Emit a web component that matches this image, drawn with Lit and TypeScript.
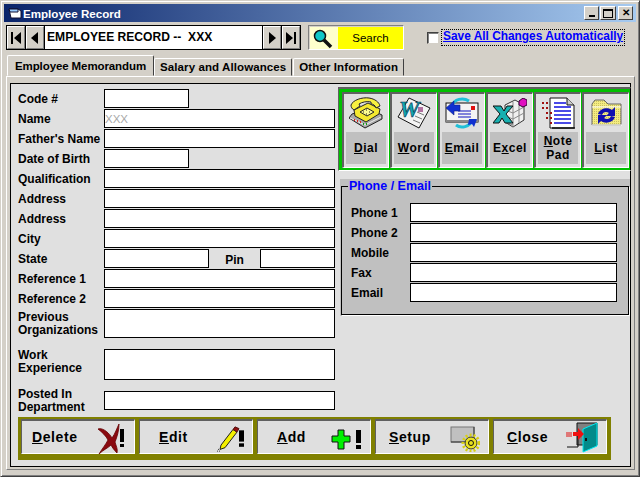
import { html, css, LitElement, svg } from "lit";
import { customElement } from "lit/decorators.js";

// icons are drawn on the pixel sizes they have in the screenshot
const icons: Record<string, any> = {
  dial: html`<svg width="34" height="32" viewBox="0 0 34 32">
    ${svg`<path d="M0 21 L16 31 L33 22 L33 18 L20 12 L3 17Z" fill="#a8a8a8" stroke="#222"/>
    <path d="M1 21 L16 28 L32 20" fill="none" stroke="#eee"/>
    <path d="M5 23h1m2 1h1m2 1h1" stroke="#e02020" stroke-width="2"/><path d="M14 27h1m2 0h1" stroke="#10a010" stroke-width="2"/>
    <path d="M5 13 L19 6 L31 12 L30 17 L17 25 L6 19Z" fill="#f4e830" stroke="#222"/>
    <path d="M11 15l7-4 7 4-7 4z" fill="#fcfc90" stroke="#222"/>
    <path d="M14 15h1m2-2h1m2 2h1m-4 2h1" stroke="#222"/>
    <path d="M2 8 C4 3 13 0 20 1 C26 2 30 5 31 9 L27 11 C26 8 24 7 22 7 L22 5 C18 4 13 5 10 7 L11 9 L5 13 C3 12 2 10 2 8Z" fill="#f8f040" stroke="#222"/>`}
  </svg>`,
  word: html`<svg width="34" height="32" viewBox="0 0 34 32">
    ${svg`<path d="M12 1 L33 11 L22 31 L1 20Z" fill="#f4f4f4" stroke="#111"/>
    <path d="M20 15l7 3m-9 1l7 3m-9 1l7 3" stroke="#777"/>
    <rect x="21" y="10" width="5" height="5" fill="#b070a0"/>
    <text x="2" y="20" font-family="Liberation Serif" font-weight="700" font-style="italic" font-size="23" fill="#10a8b0" stroke="#0a3050" stroke-width=".6">W</text>`}
  </svg>`,
  email: html`<svg width="34" height="32" viewBox="0 0 34 32">
    ${svg`<rect x="1" y="6" width="32" height="19" fill="#f4f4f4" stroke="#111"/>
    <path d="M1 24h32" stroke="#888" stroke-width="2"/>
    <rect x="26" y="9" width="4" height="4" fill="#e01010"/>
    <path d="M13 14h13m-13 3h13m-13 3h13" stroke="#1010c0"/>
    <path d="M7 9 C9 2 18 0 24 4" fill="none" stroke="#20c0d8" stroke-width="3"/>
    <path d="M1 11l8-7v4h6v6h-6v4z" fill="#1030d0" stroke="#102080" stroke-width=".6"/>
    <path d="M27 23 C25 30 16 32 11 28" fill="none" stroke="#20c0d8" stroke-width="3"/>
    <path d="M24 22h8l-3 8-2-3-4 1z" fill="#1030d0"/>`}
  </svg>`,
  excel: html`<svg width="34" height="30" viewBox="0 0 34 30">
    ${svg`<path d="M12 7 L22 2 L31 7 V22 L20 29 L12 24Z" fill="#f0f0f0" stroke="#333"/>
    <path d="M20 4V29M26 5V25M12 12l8 3 11-6M12 18l8 3 11-6M12 24l8 3" fill="none" stroke="#888"/>
    <path d="M0 8h8l3 5 3-5h6l-7 8 7 9h-8l-3-5-3 5H0l7-9z" fill="#18b0b0" stroke="#111"/>
    <path d="M26 3l4-3 4 2v5l-4 2-4-2z" fill="#e010c0" stroke="#300030"/>`}
  </svg>`,
  note: html`<svg width="34" height="32" viewBox="0 0 34 32">
    ${svg`<path d="M9 1H26L33 8V31H9Z" fill="#fff" stroke="#111"/>
    <path d="M26 1V8H33" fill="#ccc" stroke="#111"/>
    <path d="M11 31h23" stroke="#111" stroke-width="1.5"/>
    <path d="M13 6h12M13 10h17M13 14h17M13 18h17M13 22h17M13 26h17" stroke="#1010e0" stroke-width="1.5"/>
    <path d="M1 6h2m2 0h2m-6 5h2m2 0h2m-2 5h2m2 0h2m-6 5h2m2 0h2m-2 5h2" stroke="#a01010" stroke-width="2" stroke-dasharray="2 1"/>`}
  </svg>`,
  list: html`<svg width="33" height="28" viewBox="0 0 33 28">
    ${svg`<defs><pattern id="dots" width="2" height="2" patternUnits="userSpaceOnUse"><rect width="2" height="2" fill="#f4ec80"/><rect width="1" height="1" fill="#c8c060"/></pattern></defs>
    <path d="M2 26 V5 L5 1 H14 L18 5 H31 V26Z" fill="url(#dots)" stroke="#666"/>
    <path d="M2 8 H31 M2 26h30" stroke="#fff"/>
    <path d="M8 15 C10 9 18 8 22 11 L25 8 V17 H16 L19 14 C16 12 13 13 12 16Z" fill="#1010b0"/>
    <path d="M25 18 C23 24 15 25 11 22 L8 25 V16 H17 L14 19 C17 21 20 20 21 17Z" fill="#1010b0"/>`}
  </svg>`,
  delete: html`<svg width="30" height="30" viewBox="0 0 30 30">
    ${svg`<path d="M0 5 C5 3 12 10 14 14 C17 10 19 4 21 0 C21 7 19 13 17 18 C18 22 20 25 19 29 C16 26 14 23 13 21 C10 24 5 26 1 30 C4 25 8 20 10 16 C8 12 4 8 0 5Z" fill="#8a0a10" stroke="#600" stroke-width=".8"/>
    <rect x="22" y="5" width="4" height="13" fill="#000"/><rect x="22" y="20" width="4" height="3" fill="#000"/>`}
  </svg>`,
  edit: html`<svg width="32" height="26" viewBox="0 0 32 30" preserveAspectRatio="none">
    ${svg`<path d="M7 22 L19 4 L23 7 L11 25 L6 27Z" fill="#f4f000" stroke="#111"/>
    <path d="M19 4 L21 1 L25 3 L23 7Z" fill="#901010" stroke="#501010"/>
    <path d="M4 27h1m-2 2h1m1 0h1" stroke="#333"/>
    <rect x="25" y="5" width="5" height="13" fill="#000"/><rect x="25" y="20" width="5" height="4" fill="#000"/>`}
  </svg>`,
  add: html`<svg width="32" height="22" viewBox="0 0 32 22">
    ${svg`<path d="M7 1H13V7H19V13H13V20H7V13H1V7H7Z" fill="#00f000" stroke="#111"/>
    <rect x="25" y="1" width="5" height="13" fill="#000"/><rect x="25" y="16" width="5" height="4" fill="#000"/>`}
  </svg>`,
  setup: html`<svg width="30" height="26" viewBox="0 0 30 26">
    ${svg`<rect x="1" y="1" width="23" height="15" fill="#c0c0c0" stroke="#777"/>
    <path d="M1 16h23V1" fill="none" stroke="#333"/>
    <circle cx="21" cy="17" r="6" fill="#e8e020" stroke="#333"/>
    <circle cx="21" cy="17" r="8" fill="none" stroke="#d8d010" stroke-width="3" stroke-dasharray="2 2"/>
    <circle cx="21" cy="17" r="2.5" fill="#e8e020" stroke="#111"/>`}
  </svg>`,
  close: html`<svg width="32" height="32" viewBox="0 0 32 32">
    ${svg`<path d="M11 2H31V24H11Z" fill="#808080" stroke="#111"/>
    <path d="M17 8 L31 2 V25 L17 31Z" fill="#048a8a" stroke="#00e8f0"/>
    <rect x="19" y="17" width="2" height="3" fill="#111"/>
    <path d="M1 26H12V13" fill="none" stroke="#111"/>
    <path d="M1 11v5m2-5v5m2-5v5" stroke="#e01010"/>
    <path d="M7 11h5V7l6 6-6 6v-4H7z" fill="#f01010"/>`}
  </svg>`,
};

const tools = [
  { icon: "dial", label: html`<u>D</u>ial` },
  { icon: "word", label: html`<u>W</u>ord` },
  { icon: "email", label: html`<u>E</u>mail` },
  { icon: "excel", label: html`E<u>x</u>cel` },
  { icon: "note", label: html`<u>N</u>ote<br />Pad` },
  { icon: "list", label: html`<u>L</u>ist` },
];

const actions = [
  { icon: "delete", cls: "a-delete", label: html`<u>D</u>elete` },
  { icon: "edit", cls: "a-edit", label: html`<u>E</u>dit` },
  { icon: "add", cls: "a-add", label: html`<u>A</u>dd` },
  { icon: "setup", cls: "a-setup", label: html`<u>S</u>etup` },
  { icon: "close", cls: "a-close", label: html`<u>C</u>lose` },
];

@customElement("app-root")
export class AppRoot extends LitElement {
  field(label: string, cls = "wide", value = "") {
    return html`<div class="row">
      <span class="label">${label}</span>
      <input class="${cls}" .value=${value} />
    </div>`;
  }

  render() {
    return html`
      <div class="window">
        <div class="title">
          <svg width="14" height="13" viewBox="0 0 14 13">
            <path d="M1 2h9l3 2v7H3z" fill="#fff" stroke="#113"/>
            <path d="M1 2h9v3H2z" fill="#9cf" stroke="#113"/>
          </svg>
          <span>Employee Record</span>
          <div class="caption">
            <button class="cap"><i class="min"></i></button>
            <button class="cap wider"><i class="max"></i></button>
            <button class="cap close">✕</button>
          </div>
        </div>

        <div class="top">
          <div class="nav">
            <button class="nb">
              <svg width="12" height="12" viewBox="0 0 12 12"><path d="M1 0h2v12H1zM11 0v12L4 6z" /></svg>
            </button>
            <button class="nb">
              <svg width="10" height="12" viewBox="0 0 10 12"><path d="M8 0v12L1 6z" /></svg>
            </button>
            <div class="record">EMPLOYEE RECORD --  XXX</div>
            <button class="nb">
              <svg width="10" height="12" viewBox="0 0 10 12"><path d="M2 0v12l7-6z" /></svg>
            </button>
            <button class="nb">
              <svg width="12" height="12" viewBox="0 0 12 12"><path d="M1 0v12l7-6zM9 0h2v12H9z" /></svg>
            </button>
          </div>
          <div class="search">
            <div class="glass">
              <svg width="20" height="20" viewBox="0 0 20 20">
                <path d="M11 11l7 7" stroke="#111" stroke-width="3.5" />
                <circle cx="7" cy="7" r="5.5" fill="#10c8c8" stroke="#111" stroke-width="1.5" />
              </svg>
            </div>
            <div class="find">Search</div>
          </div>
          <label class="auto">
            <span class="check"></span>
            <span class="auto-text">Save All Changes Automatically</span>
          </label>
        </div>

        <div class="tabs">
          <div class="tab active">Employee Memorandum</div>
          <div class="tab">Salary and Allowances</div>
          <div class="tab">Other Information</div>
        </div>

        <div class="pane">
          <div class="sheet">
            <div class="body">
              <div class="form">
                ${this.field("Code #", "short")}
                ${this.field("Name", "wide name", "XXX")}
                ${this.field("Father's Name")}
                ${this.field("Date of Birth", "short")}
                ${this.field("Qualification")}
                ${this.field("Address")}
                ${this.field("Address")}
                ${this.field("City")}
                <div class="row">
                  <span class="label">State</span>
                  <input class="state" />
                  <span class="pin">Pin</span>
                  <input class="pinbox" />
                </div>
                ${this.field("Reference 1")}
                ${this.field("Reference 2")}
                <div class="row prev">
                  <span class="label two">Previous<br />Organizations</span>
                  <textarea class="wide"></textarea>
                </div>
                <div class="row work">
                  <span class="label two">Work<br />Experience</span>
                  <textarea class="wide"></textarea>
                </div>
                <div class="row posted">
                  <span class="label two">Posted In<br />Department</span>
                  <input class="wide" />
                </div>
              </div>

              <div class="side">
                <div class="toolwrap">
                  <div class="tools">
                    ${tools.map(
                      (t) => html`<button class="tool">
                        <span class="tool-icon">${icons[t.icon]}</span>
                        <span class="tool-label"><span>${t.label}</span></span>
                      </button>`
                    )}
                  </div>
                </div>
                <div class="group">
                  <fieldset class="phones">
                    <legend>Phone / Email</legend>
                    ${["Phone 1", "Phone 2", "Mobile", "Fax", "Email"].map(
                      (p) => html`<div class="row">
                        <span class="plabel">${p}</span>
                        <input class="phone" />
                      </div>`
                    )}
                  </fieldset>
                </div>
              </div>
            </div>

            <div class="actions">
              ${actions.map(
                (a) => html`<button class="action ${a.cls}">
                  <span class="action-label">${a.label}</span>
                  ${icons[a.icon]}
                </button>`
              )}
            </div>
          </div>
        </div>
      </div>
    `;
  }

  static styles = css`
    :host {
      display: block;
      width: 640px;
      height: 477px;
      font-family: "Liberation Sans", Arial, sans-serif;
      font-size: 12px;
      color: #000;
    }
    * {
      box-sizing: border-box;
    }
    button {
      font: inherit;
      color: inherit;
      padding: 0;
      margin: 0;
    }
    svg {
      display: block;
      flex: none;
    }
    input,
    textarea {
      display: block;
      margin: 0;
      padding: 0 1px;
      border: 1px solid #000;
      border-radius: 0;
      background: #fff;
      outline: none;
      resize: none;
      font: 13px "Liberation Sans", Arial, sans-serif;
    }

    .window {
      width: 640px;
      height: 477px;
      padding: 4px 3px 0 4px;
      background: #d4d0c8;
      border-top: 1px solid #d4d0c8;
      border-left: 1px solid #d4d0c8;
      border-right: 1px solid #404040;
      border-bottom: 1px solid #404040;
      box-shadow: inset 1px 1px 0 #fff, inset -1px -1px 0 #808080;
    }

    .title {
      height: 18px;
      margin: -1px 0 0 -1px;
      padding-left: 4px;
      display: flex;
      align-items: center;
      gap: 1px;
      color: #fff;
      font-weight: 700;
      font-size: 11.6px;
      background: linear-gradient(90deg, #0a246a, #a6caf0);
    }
    .caption {
      margin-left: auto;
      margin-right: 3px;
      display: flex;
      gap: 1px;
    }
    .cap {
      width: 15px;
      height: 14px;
      background: #d4d0c8;
      color: #000;
      border: 1px solid;
      border-color: #fff #404040 #404040 #fff;
      position: relative;
      display: flex;
      align-items: center;
      justify-content: center;
    }
    .cap.wider {
      width: 16px;
    }
    .cap.close {
      margin-left: 1px;
      font-size: 10px;
      font-weight: 700;
      line-height: 1;
    }
    .min {
      position: absolute;
      left: 4px;
      bottom: 2px;
      width: 6px;
      height: 2px;
      background: #000;
    }
    .max {
      width: 10px;
      height: 9px;
      border: 1px solid #000;
      border-top-width: 2px;
    }

    .top {
      display: flex;
      margin: 3px 0 0 1px;
      height: 25px;
    }
    .nav {
      width: 295px;
      height: 25px;
      flex: none;
      border: 1px solid #000;
      display: flex;
      background: #000;
      gap: 1px;
    }
    .nb {
      width: 18px;
      flex: none;
      background: #d4d0c8;
      border: 1px solid;
      border-color: #fff #808080 #808080 #fff;
      display: flex;
      align-items: center;
      justify-content: center;
    }
    .record {
      flex: 1;
      background: #fff;
      padding-left: 2px;
      white-space: pre;
      font-size: 12.1px;
      font-weight: 700;
      line-height: 23px;
    }
    .search {
      margin-left: 7px;
      width: 96px;
      height: 25px;
      flex: none;
      display: flex;
      padding: 1px 0 0 1px;
      border: 1px solid;
      border-color: #808080 #fff #fff #808080;
    }
    .glass {
      width: 28px;
      background: #ffffcc;
      padding: 2px 0 0 3px;
    }
    .find {
      flex: 1;
      background: #ffff00;
      text-align: center;
      line-height: 23px;
      font-size: 11.5px;
    }
    .auto {
      margin-left: 23px;
      display: flex;
      align-items: center;
      gap: 3px;
      height: 25px;
      color: #0000ff;
      font-weight: 700;
      font-size: 11.9px;
    }
    .check {
      width: 12px;
      height: 12px;
      background: #fff;
      border: 1px solid;
      border-color: #404040 #d4d0c8 #d4d0c8 #404040;
      box-shadow: inset 1px 1px 0 #808080;
    }
    .auto-text {
      height: 15px;
      line-height: 13px;
      padding: 0 1px;
      text-decoration: underline;
      white-space: nowrap;
      outline: 1px dotted #000;
    }

    .tabs {
      display: flex;
      align-items: flex-end;
      height: 21px;
      margin: 5px 0 0 2px;
      font-weight: 700;
      font-size: 11.5px;
    }
    .tab {
      height: 18px;
      line-height: 17px;
      padding: 0 5px;
      margin-right: 1px;
      background: #d4d0c8;
      white-space: nowrap;
      letter-spacing: 0.1px;
      border: 1px solid;
      border-color: #fff #404040 #d4d0c8 #fff;
      border-radius: 2px 2px 0 0;
    }
    .tab.active {
      height: 21px;
      width: 147px;
      margin-right: 0;
      line-height: 20px;
      letter-spacing: -0.1px;
      padding: 0 7px;
    }

    .pane {
      width: 629px;
      height: 394px;
      margin-left: 1px;
      padding: 6px 3px 2px 3px;
      border: 1px solid;
      border-color: #fff #808080 #808080 #fff;
    }
    .sheet {
      height: 384px;
      background: #e0e0e0;
      border: 1px solid #000;
      padding-top: 5px;
    }
    .body {
      display: flex;
    }
    .form {
      width: 324px;
      padding-left: 7px;
    }
    .row {
      display: flex;
      align-items: center;
      height: 20px;
      padding-bottom: 1px;
      font-weight: 700;
    }
    .label {
      width: 86px;
      flex: none;
      white-space: nowrap;
    }
    .two {
      line-height: 13px;
    }
    .row input {
      height: 19px;
    }
    .wide {
      width: 231px;
    }
    .short {
      width: 85px;
    }
    .name {
      padding: 0;
      color: #a8a8a8;
      font-size: 11.5px;
    }
    .state {
      width: 105px;
    }
    .pin {
      width: 52px;
      text-align: center;
      padding-top: 3px;
    }
    .pinbox {
      width: 75px;
    }
    .prev {
      height: 40px;
      padding: 0;
      align-items: flex-start;
    }
    .prev textarea {
      height: 29px;
    }
    .prev .label {
      padding-top: 2px;
    }
    .work {
      height: 42px;
      align-items: flex-start;
    }
    .work textarea {
      height: 31px;
    }
    .posted {
      height: 19px;
      padding: 0;
    }

    .side {
      margin-top: -2px;
      padding-left: 3px;
      width: 296px;
    }
    .toolwrap {
      width: 293px;
      height: 84px;
      border: 1px solid;
      border-width: 2px 1px 1px 1px;
      border-color: #606060 #000 #fff #606060;
    }
    .tools {
      height: 81px;
      background: #00c000;
      padding: 3px 2px 2px 3px;
      display: flex;
      gap: 1px;
    }
    .tool {
      width: 47px;
      height: 76px;
      flex: none;
      padding: 0 2px 3px 2px;
      background: #e0e0e0;
      border: 1px solid;
      border-width: 2px 1px 1px 2px;
      border-color: #606060 #fff #fff #606060;
      display: flex;
      flex-direction: column;
    }
    .tool-icon {
      height: 38px;
      width: 100%;
      display: flex;
      align-items: center;
      justify-content: center;
      flex: none;
    }
    .tool-label {
      flex: 1;
      width: 100%;
      background: #c0c0c0;
      display: flex;
      align-items: center;
      justify-content: center;
      text-align: center;
      font-weight: 700;
      line-height: 14px;
      letter-spacing: 0.5px;
    }

    .group {
      width: 290px;
      height: 137px;
      margin: 8px 0 0 2px;
      padding: 0 1px 1px 1px;
      background: #c0c0c0;
    }
    .phones {
      width: 288px;
      height: 136px;
      margin: 0;
      padding: 10px 0 0 9px;
      min-inline-size: 0;
      border: 1px solid #000;
      box-shadow: 1px 1px 0 #fff;
    }
    .phones legend {
      margin-left: -3px;
      padding: 0 1px;
      color: #0000ff;
      font-weight: 700;
      font-size: 12.5px;
      line-height: 14px;
    }
    .plabel {
      width: 59px;
      flex: none;
    }
    .phone {
      width: 207px;
    }

    .actions {
      width: 593px;
      height: 43px;
      margin: 7px 0 0 7px;
      background: #808000;
      display: flex;
      gap: 4px;
      padding: 2px 4px 6px 3px;
    }
    .action {
      width: 114px;
      height: 35px;
      flex: none;
      position: relative;
      background: #dfdfdf;
      border: 1px solid;
      border-width: 2px 1px 1px 1px;
      border-color: #606060 #fff #fff #606060;
      display: flex;
      align-items: center;
      font-size: 14px;
      font-weight: 700;
      letter-spacing: 0.6px;
    }
    .action svg {
      position: absolute;
    }
    .action-label {
      padding-left: 10px;
    }
    .a-edit .action-label,
    .a-add .action-label {
      padding-left: 19px;
    }
    .a-setup .action-label,
    .a-close .action-label {
      padding-left: 13px;
    }
    .a-delete svg {
      left: 76px;
      top: 3px;
    }
    .a-edit svg {
      left: 74px;
      top: 5px;
    }
    .a-add svg {
      left: 73px;
      top: 8px;
    }
    .a-setup svg {
      left: 74px;
      top: 5px;
    }
    .a-close svg {
      left: 72px;
      top: 0;
    }
  `;
}
